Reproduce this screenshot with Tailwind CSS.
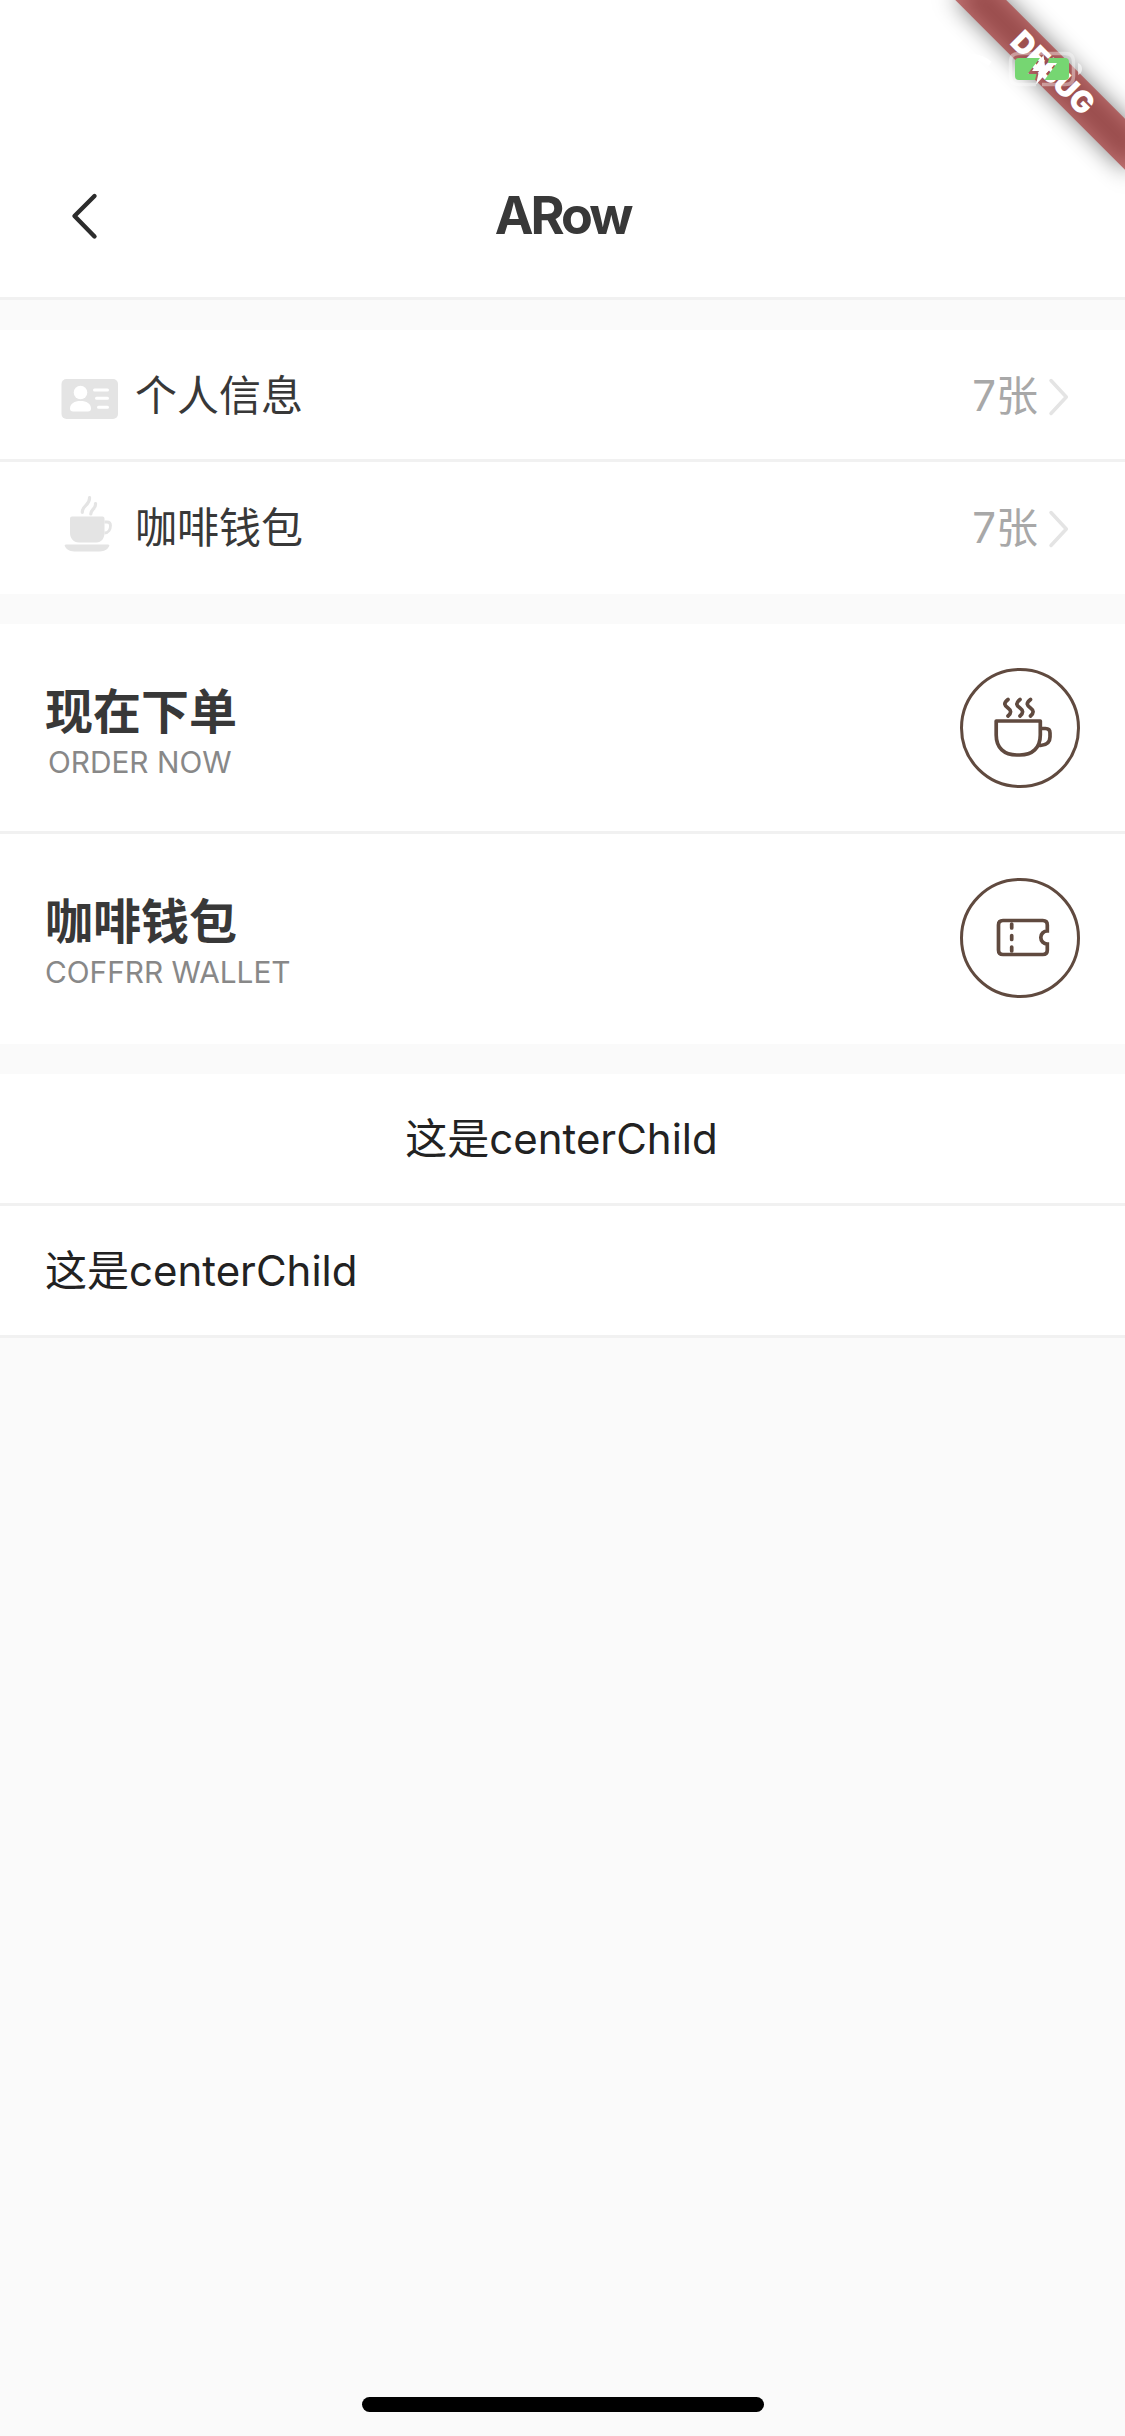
<!DOCTYPE html>
<html lang="zh-CN">
<head>
<meta charset="utf-8">
<title>ARow</title>
<script src="https://cdn.jsdelivr.net/npm/@tailwindcss/browser@4"></script>
</head>
<body class="bg-[#fafafa]">
<div class="relative flex h-[2436px] w-[1125px] flex-col overflow-hidden bg-[#fafafa] font-[Inter,'Noto_Sans_CJK_SC',sans-serif] text-[#383838]">
  <header class="grid h-[300px] shrink-0 grid-cols-3 items-center border-b-3 border-[#f1f1f1] bg-white pt-[134px]">
    <svg class="ml-[66px] h-[54px] w-[36px]" viewBox="0 0 36 54" fill="none" stroke="#2c2c2c" stroke-width="4.4" stroke-linecap="round" stroke-linejoin="round"><path d="M28.500 7 8.500 27l20 20.500"/></svg>
    <h1 class="text-center text-[52px] font-bold leading-[60px] tracking-[-3px]">ARow</h1>
  </header>

  <section class="mt-[30px] flex shrink-0 flex-col bg-white">
    <div class="flex h-[132px] items-center border-b-3 border-[#f1f1f1] pl-[60px] pr-[54px]">
      <svg class="mt-[9px] h-[60px] w-[60px]" viewBox="0 0 60 60"><rect x="1.500" y="10" width="56.500" height="40" rx="5" fill="#e4e4e4"/><g fill="#fff"><circle cx="20.500" cy="23.500" r="6.800"/><path d="M10 39.500c0-5 4.500-7.500 10.500-7.500s10.500 2.500 10.500 7.500c0 2-1 3-3 3H13c-2 0-3-1-3-3z"/></g><path d="M34.500 21h13M36.500 29.300h11M38.500 38.300h9" stroke="#fff" stroke-width="3" stroke-linecap="round"/></svg>
      <span class="ml-[15px] mt-[2px] text-[42px] leading-[60px]">个人信息</span>
      <span class="ml-auto mt-[2px] text-[42px] leading-[60px] text-[#a8a8a8]">7张</span>
      <svg class="ml-[9px] mt-[4px] h-[42px] w-[24px]" viewBox="0 0 24 42" fill="none" stroke="#e4e4e4" stroke-width="3.500" stroke-linecap="round" stroke-linejoin="round"><path d="M4 4.500 19.300 21 4 37.500"/></svg>
    </div>
    <div class="flex h-[132px] items-center pl-[60px] pr-[54px]">
      <svg class="mt-[-9px] h-[60px] w-[60px]" viewBox="0 0 60 60" fill="#e4e4e4"><path d="M10 24.500q0-2 2-2h30.500q2 0 2 2V39c0 5-3 9.500-8 9.500H19c-6 0-9-5-9-9.500zM6 50.500h42q2 0 1 2c-2 4-6 5-11 5H16c-5 0-9-1-11-5q-1-2 1-2z"/><path d="M44.500 28h2.500q3.500 0 3.500 3.500c0 4-2 7.500-6 7.500" fill="none" stroke="#e4e4e4" stroke-width="2.800"/><path d="M29.500 3.500c.8 8-7.700 7.500-7.200 15M35.500 9.500c.7 5.500-4.700 5.500-4.700 10.500" fill="none" stroke="#e4e4e4" stroke-width="3.200" stroke-linecap="round"/></svg>
      <span class="ml-[15px] text-[42px] leading-[60px]">咖啡钱包</span>
      <span class="ml-auto text-[42px] leading-[60px] text-[#a8a8a8]">7张</span>
      <svg class="ml-[9px] mt-px h-[42px] w-[24px]" viewBox="0 0 24 42" fill="none" stroke="#e4e4e4" stroke-width="3.500" stroke-linecap="round" stroke-linejoin="round"><path d="M4 4.500 19.300 21 4 37.500"/></svg>
    </div>
  </section>

  <section class="mt-[30px] flex shrink-0 flex-col bg-white">
    <div class="flex h-[210px] items-center justify-between border-b-3 border-[#f1f1f1] px-[45px]">
      <div class="pt-[8px]">
        <h2 class="text-[48px] font-bold leading-[60px]">现在下单</h2>
        <p class="pl-[3px] text-[29.800px] leading-[40px] text-[#888]">ORDER NOW</p>
      </div>
      <svg class="h-[120px] w-[120px]" viewBox="0 0 120 120" fill="none" stroke="#604a3f" stroke-width="3.700" stroke-linecap="round" stroke-linejoin="round"><circle cx="60" cy="60" r="58.500" stroke-width="3"/><path d="M36.200 53H80.300V67c0 13-8 20-20.500 20h-3c-12.500 0-20.600-7-20.600-20zM81 60.500h4.500q4.500 0 4.500 4.500v4c0 5-3 8-9.500 8.500"/><path d="M48 31.500c-5 4-3.500 6 0 8.500s3.500 5 0 8M60 31.500c-5 4-3.500 6 0 8.500s3.500 5 0 8M70.500 31.500c-5 4-3.500 6 0 8.500s3.500 5 0 8"/></svg>
    </div>
    <div class="flex h-[210px] items-center justify-between px-[45px] pb-[3px]">
      <div class="pt-[8px]">
        <h2 class="text-[48px] font-bold leading-[60px]">咖啡钱包</h2>
        <p class="text-[29.800px] leading-[40px] text-[#888]">COFFRR WALLET</p>
      </div>
      <svg class="h-[120px] w-[120px]" viewBox="0 0 120 120" fill="none" stroke="#604a3f" stroke-width="3.700" stroke-linecap="round"><circle cx="60" cy="60" r="58.500" stroke-width="3"/><path d="M87.300 53V47q0-4.500-4.500-4.500H43q-4.500 0-4.500 4.500V72q0 4.500 4.500 4.500H82.800q4.500 0 4.500-4.500V66a6.500 6.500 0 0 1 0-13z"/><path d="M51.700 46v4M51.700 57.500v4M51.700 69v4"/></svg>
    </div>
  </section>

  <section class="mt-[30px] flex shrink-0 flex-col bg-white text-[42px] leading-[60px] text-[#222]">
    <div class="flex h-[132px] items-center justify-center border-b-3 border-[#f1f1f1] pr-[2px]"><span>这是centerChild</span></div>
    <div class="flex h-[132px] items-center border-b-3 border-[#f1f1f1] px-[45px]"><span>这是centerChild</span></div>
  </section>

  <div class="mx-auto mb-[24px] mt-auto h-[15px] w-[402px] shrink-0 rounded-full bg-black"></div>

  <svg class="absolute right-0 top-0 h-[240px] w-[240px]" viewBox="885 0 240 240">
    <defs><filter id="soft" filterUnits="userSpaceOnUse" x="-180" y="20" width="360" height="170" color-interpolation-filters="sRGB"><feGaussianBlur stdDeviation="11.900"/></filter></defs>
    <g transform="translate(1125 0) rotate(45)">
      <rect x="-120" y="84" width="240" height="36" fill="#000" fill-opacity=".5" filter="url(#soft)"/>
      <rect x="-120" y="84" width="240" height="36" fill="#a62b2b" fill-opacity=".627"/>
      <text x="0.500" y="113" text-anchor="middle" textLength="104" lengthAdjust="spacingAndGlyphs" fill="#fff" font-family="Inter, sans-serif" font-size="30" font-weight="900">DEBUG</text>
    </g>
    <path d="M957 61q18-10 33 3" fill="none" stroke="#fff" stroke-width="5"/>
    <path d="M1036 84.500H1018.500q-8 0-8-8V61.500q0-8 8-8h47q8 0 8 8v15q0 8-8 8H1042" fill="none" stroke="#fff" stroke-opacity=".4" stroke-width="3.500"/>
    <path d="M1078 63q4 1.500 4 6t-4 6z" fill="#fff" fill-opacity=".6"/>
    <path d="M1040 58 1027.500 74h9l-1.500 6H1019q-4 0-4-4V62q0-4 4-4zM1049 58H1065q4 0 4 4V76q0 4-4 4H1044.500L1057 63h-9z" fill="#76d672"/>
    <path d="M1043.500 55 1032 71h7l-3 13.500 17-18.500h-8z" fill="#fff"/>
  </svg>
</div>
</body>
</html>
